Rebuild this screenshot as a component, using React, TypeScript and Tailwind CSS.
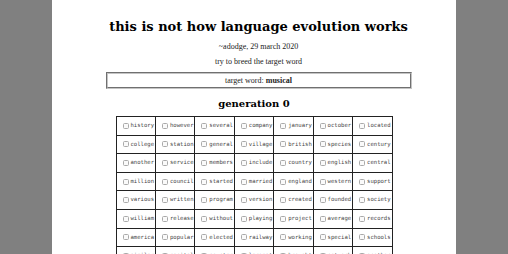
const words = [
  ['history', 'however', 'several', 'company', 'january', 'october', 'located'],
  ['college', 'station', 'general', 'village', 'british', 'species', 'century'],
  ['another', 'service', 'members', 'include', 'country', 'english', 'central'],
  ['million', 'council', 'started', 'married', 'england', 'western', 'support'],
  ['various', 'written', 'program', 'version', 'created', 'founded', 'society'],
  ['william', 'release', 'without', 'playing', 'project', 'average', 'records'],
  ['america', 'popular', 'elected', 'railway', 'working', 'special', 'schools'],
  ['similar', 'capital', 'counter', 'largest', 'brought', 'network', 'another'],
];

const Cell = ({ word }: { word: string }) => (
  <td className="border border-[#222] p-0">
    <div className="flex items-center gap-[2px] pl-[6px] h-[17.6px]">
      <span className="shrink-0 w-[6px] h-[6px] rounded-[1.5px] border border-[#aaa] bg-[#fafafa]" />
      <span className="text-[5.6px] leading-none text-[#444]" style={{ fontFamily: '"DejaVu Sans Mono", monospace' }}>
        {word}
      </span>
    </div>
  </td>
);

export default function App() {
  return (
    <div className="h-screen overflow-hidden bg-[#808080]">
      <div
        className="w-[404px] mx-auto bg-white h-full flex flex-col items-center pt-[20px]"
        style={{ fontFamily: '"Liberation Serif", serif' }}
      >
        <div className="flex flex-col items-center pl-[9px]">
          <h1 className="text-[13px] font-bold text-black leading-none" style={{ fontFamily: '"DejaVu Serif", serif' }}>
            this is not how language evolution works
          </h1>
          <p className="text-[8px] mt-[10px] leading-none text-[#222]">~adodge, 29 march 2020</p>
          <p className="text-[8px] mt-[7px] leading-none text-[#222]">try to breed the target word</p>
          <div className="shrink-0 w-[306px] h-[17px] mt-[6px] border-2 [border-style:groove] border-[#c4c4c4] flex items-center justify-center text-[8px] text-[#222]">
            <span>
              target word: <b>musical</b>
            </span>
          </div>
        </div>
        <h2 className="text-[10px] font-bold text-black leading-none mt-[10px]" style={{ fontFamily: '"DejaVu Serif", serif' }}>
          generation 0
        </h2>
        <table className="border-collapse mt-[7px] w-[277px] table-fixed shrink-0">
          <tbody>
            {words.map((row, i) => (
              <tr key={i}>
                {row.map((w, j) => (
                  <Cell key={j} word={w} />
                ))}
              </tr>
            ))}
          </tbody>
        </table>
      </div>
    </div>
  );
}
